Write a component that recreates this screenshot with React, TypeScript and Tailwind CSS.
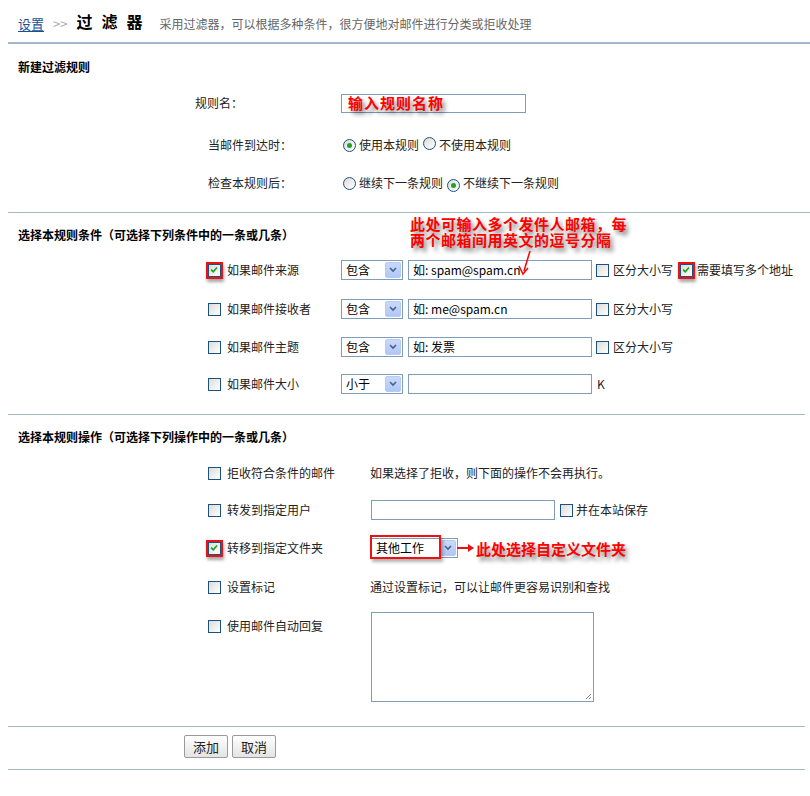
import React from "react";

const FONT = { fontFamily: '"Noto Sans CJK SC", "Noto Sans", sans-serif' };

function Check({ checked = false, marked = false }: { checked?: boolean; marked?: boolean }) {
  const box = (
    <span className="relative inline-block w-[13px] h-[13px] border border-[#1c5180] bg-gradient-to-br from-[#dcdcd7] to-white shrink-0">
      {checked && (
        <svg viewBox="0 0 13 13" className="absolute left-0 top-0 w-[11px] h-[11px]">
          <path d="M2.5 5.5 L5 8 L9.5 3" fill="none" stroke="#21a121" strokeWidth="2" />
        </svg>
      )}
    </span>
  );
  if (!marked) return box;
  return (
    <span className="inline-flex items-center justify-center w-[17px] h-[17px] border-2 border-[#ee1111] shadow-[1px_3px_3px_rgba(0,0,0,0.35)] shrink-0">
      {box}
    </span>
  );
}

function Radio({ checked = false }: { checked?: boolean }) {
  return (
    <span className="inline-flex items-center justify-center w-[13px] h-[13px] rounded-full border border-[#1c5180] bg-gradient-to-br from-[#dcdcd7] to-white shrink-0">
      {checked && <span className="w-[5px] h-[5px] rounded-full bg-[#21a121]" />}
    </span>
  );
}

function Select({ value, width = "w-[62px]" }: { value: string; width?: string }) {
  return (
    <div className={`${width} h-[20px] border border-[#7f9db9] bg-white flex items-center justify-between pl-[4px] pr-[1px] shrink-0`}>
      <span className="text-[12px] text-black">{value}</span>
      <span className="w-[16px] h-[16px] rounded-[2px] bg-gradient-to-b from-[#c9d9fb] to-[#b0c8f6] border border-[#b7cbf1] flex items-center justify-center">
        <svg viewBox="0 0 8 6" className="w-[8px] h-[6px]">
          <path d="M1 1 L4 4 L7 1" fill="none" stroke="#4d6185" strokeWidth="1.6" />
        </svg>
      </span>
    </div>
  );
}

function Input({ value = "", width = "w-[184px]" }: { value?: string; width?: string }) {
  return (
    <div className={`${width} h-[20px] border border-[#7f9db9] bg-white flex items-center px-[4px] text-[12px] text-black shrink-0`}>
      {value}
    </div>
  );
}

function CondRow({ label, marked, cmp, ph, tail, extra, className = "" }: { label: string; marked?: boolean; cmp: string; ph: string; tail?: string; extra?: React.ReactNode; className?: string }) {
  return (
    <div className={`h-[26px] flex items-center pl-[198px] ${className}`}>
      <div className="w-[135px] flex items-center gap-[4px]">
        <span className="w-[17px] flex justify-center">
          <Check checked={marked} marked={marked} />
        </span>
        <span>{label}</span>
      </div>
      <Select value={cmp} />
      <div className="ml-[5px]">
        <Input value={ph} />
      </div>
      {tail ? (
        <div className="ml-[4px] flex items-center gap-[4px]">
          <Check />
          <span>{tail}</span>
        </div>
      ) : (
        <span className="ml-[5px]">K</span>
      )}
      {extra}
    </div>
  );
}

function ActRow({ label, marked, children, className = "" }: { label: string; marked?: boolean; children?: React.ReactNode; className?: string }) {
  return (
    <div className={`min-h-[26px] flex items-center pl-[198px] ${className}`}>
      <div className="w-[164px] flex items-center gap-[4px]">
        <span className="w-[17px] flex justify-center">
          <Check checked={marked} marked={marked} />
        </span>
        <span>{label}</span>
      </div>
      {children}
    </div>
  );
}

const red = "text-[#ff0000] font-bold [text-shadow:3px_4px_4px_rgba(0,0,0,0.45)]";

export default function App() {
  return (
    <div style={FONT} className="w-[810px] h-[796px] bg-white text-[12px] text-[#222] relative overflow-hidden">
      {/* header */}
      <div className="ml-[8px] h-[44px] border-b-2 border-[#a3b7c9] flex items-end pb-[9px] pl-[10px]">
        <a className="text-[13px] text-[#1b4f93] underline underline-offset-2">设置</a>
        <span className="ml-[9px] text-[#aaa] text-[13px] leading-[18px]">&gt;&gt;</span>
        <span className="ml-[9px] text-[16px] font-bold text-black tracking-[9px]">过滤器</span>
        <span className="ml-[8px] text-[12px] text-[#666]">采用过滤器，可以根据多种条件，很方便地对邮件进行分类或拒收处理</span>
      </div>

      {/* new rule */}
      <div className="ml-[8px] border-b border-[#a3b7c9] pb-[16px]">
        <div className="h-[46px] flex items-center pl-[10px] font-bold text-black">新建过滤规则</div>
        <div className="h-[26px] flex items-center pl-[187px]">
          <span className="w-[146px]">规则名：</span>
          <div className="w-[185px] h-[19px] border border-[#7f9db9] flex items-center px-[6px]">
            <span className={`${red} text-[15px] tracking-[1px]`}>输入规则名称</span>
          </div>
        </div>
        <div className="h-[26px] mt-[16px] flex items-center pl-[200px]">
          <span className="w-[135px]">当邮件到达时：</span>
          <Radio checked />
          <span className="ml-[3px]">使用本规则</span>
          <span className="ml-[4px]"><Radio /></span>
          <span className="ml-[3px]">不使用本规则</span>
        </div>
        <div className="h-[26px] mt-[12px] flex items-center pl-[200px]">
          <span className="w-[135px]">检查本规则后：</span>
          <Radio />
          <span className="ml-[3px]">继续下一条规则</span>
          <span className="ml-[4px]"><Radio checked /></span>
          <span className="ml-[3px]">不继续下一条规则</span>
        </div>
      </div>

      {/* conditions */}
      <div className="ml-[8px] mr-[5px] border-b border-[#a3b7c9] pb-[17px]">
        <div className="h-[44px] flex items-center pl-[10px] font-bold text-black">选择本规则条件（可选择下列条件中的一条或几条）</div>
        <CondRow
          label="如果邮件来源"
          marked
          cmp="包含"
          ph="如: spam@spam.cn"
          tail="区分大小写"
          extra={
            <div className="ml-[5px] flex items-center gap-[2px]">
              <Check checked marked />
              <span>需要填写多个地址</span>
            </div>
          }
        />
        <CondRow className="mt-[13px]" label="如果邮件接收者" cmp="包含" ph="如: me@spam.cn" tail="区分大小写" />
        <CondRow className="mt-[12px]" label="如果邮件主题" cmp="包含" ph="如: 发票" tail="区分大小写" />
        <CondRow className="mt-[11px]" label="如果邮件大小" cmp="小于" ph="" />
      </div>

      {/* actions */}
      <div className="ml-[8px] mr-[5px] border-b border-[#a3b7c9] pb-[24px]">
        <div className="h-[44px] flex items-center pl-[10px] font-bold text-black">选择本规则操作（可选择下列操作中的一条或几条）</div>
        <ActRow className="mt-[1px]" label="拒收符合条件的邮件">
          <span>如果选择了拒收，则下面的操作不会再执行。</span>
        </ActRow>
        <ActRow className="mt-[11px]" label="转发到指定用户">
          <div className="ml-[1px]">
            <Input width="w-[184px]" />
          </div>
          <div className="ml-[5px] flex items-center gap-[3px]">
            <Check />
            <span>并在本站保存</span>
          </div>
        </ActRow>
        <ActRow className="mt-[12px]" label="转移到指定文件夹" marked>
          <div className="relative ml-[1px]">
            <Select value="其他工作" width="w-[87px]" />
            <span className="absolute left-[-1px] top-[-3px] w-[71px] h-[24px] border-2 border-[#ee1111] shadow-[2px_3px_3px_rgba(0,0,0,0.3)]" />
          </div>
        </ActRow>
        <ActRow className="mt-[13px]" label="设置标记">
          <span>通过设置标记，可以让邮件更容易识别和查找</span>
        </ActRow>
        <div className="mt-[12px] flex items-start pl-[198px]">
          <div className="w-[164px] flex items-center gap-[4px] pt-[5px]">
            <span className="w-[17px] flex justify-center">
              <Check />
            </span>
            <span>使用邮件自动回复</span>
          </div>
          <div className="ml-[1px] w-[223px] h-[90px] border border-[#7f9db9] relative">
            <svg viewBox="0 0 8 8" className="absolute right-[1px] bottom-[1px] w-[8px] h-[8px]">
              <path d="M7 2 L2 7 M7 5 L5 7" stroke="#888" strokeWidth="1" />
            </svg>
          </div>
        </div>
      </div>

      {/* buttons */}
      <div className="ml-[8px] mr-[5px] border-b border-[#a3b7c9] pt-[8px] pb-[11px] pl-[176px] flex gap-[4px]">
        <button className="w-[44px] h-[23px] border border-[#9a9a9a] rounded-[2px] bg-gradient-to-b from-white to-[#e4e4e4] text-[13px] text-[#222]">添加</button>
        <button className="w-[44px] h-[23px] border border-[#9a9a9a] rounded-[2px] bg-gradient-to-b from-white to-[#e4e4e4] text-[13px] text-[#222]">取消</button>
      </div>

      {/* annotations */}
      <div className={`absolute left-[410px] top-[216px] text-[15px] leading-[16px] tracking-[0.5px] ${red}`}>
        此处可输入多个发件人邮箱，每
        <br />
        两个邮箱间用英文的逗号分隔
      </div>
      <svg className="absolute left-[515px] top-[250px] w-[24px] h-[28px]" viewBox="0 0 24 28">
        <path d="M15 1 L9 21" stroke="#ee1111" strokeWidth="1.6" fill="none" />
        <path d="M4 16 L8 24 L13 18" stroke="#ee1111" strokeWidth="1.6" fill="none" />
      </svg>
      <svg className="absolute left-[456px] top-[542px] w-[20px] h-[12px]" viewBox="0 0 20 12">
        <path d="M1 6 L16 6" stroke="#ee1111" strokeWidth="2" />
        <path d="M12 2 L18 6 L12 10 Z" fill="#ee1111" />
      </svg>
      <div className={`absolute left-[476px] top-[540px] text-[15px] leading-[18px] ${red}`}>此处选择自定义文件夹</div>
    </div>
  );
}
